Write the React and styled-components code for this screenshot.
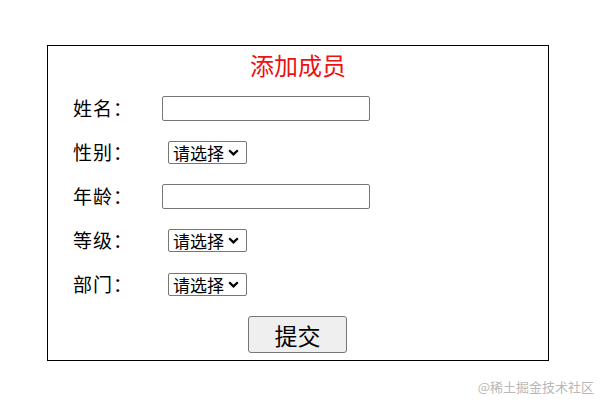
import React from "react";
import styled, { createGlobalStyle } from "styled-components";

const GlobalStyle = createGlobalStyle`
  html, body {
    margin: 0;
    padding: 0;
    background: #fff;
  }
  body {
    font-family: "Noto Sans CJK SC", "Noto Sans", sans-serif;
    color: #000;
  }
`;

const chevron = encodeURIComponent(
  '<svg xmlns="http://www.w3.org/2000/svg" width="11" height="7" viewBox="0 0 11 7"><path d="M1.2 1.2 L5.5 5.4 L9.8 1.2" fill="none" stroke="#000" stroke-width="2.2"/></svg>'
);

const Page = styled.div`
  width: 607px;
  height: 407px;
  padding: 45px 0 0 47px;
  box-sizing: border-box;
`;

const Card = styled.form`
  width: 502px;
  height: 316px;
  box-sizing: border-box;
  border: 1px solid #000;
  padding: 3px 0 0 25px;
  display: flex;
  flex-direction: column;
`;

const Title = styled.h2`
  margin: 0 0 5px -25px;
  font-size: 24px;
  line-height: 32px;
  font-weight: 400;
  color: #ee1111;
  text-align: center;
`;

const Row = styled.div`
  height: 44px;
  display: flex;
  align-items: center;
`;

const Label = styled.label`
  width: 89px;
  font-size: 19px;
  line-height: 24px;
  letter-spacing: 1px;
`;

const TextInput = styled.input`
  width: 208px;
  height: 25px;
  box-sizing: border-box;
  border: 1px solid #767676;
  border-radius: 2px;
  padding: 1px 2px;
  font-size: 14px;
`;

const Select = styled.select`
  appearance: none;
  -webkit-appearance: none;
  width: 79px;
  height: 23px;
  box-sizing: border-box;
  margin-left: 6px;
  border: 1px solid #767676;
  border-radius: 2px;
  background: #fff url("data:image/svg+xml,${chevron}") no-repeat right 7px center;
  font-family: "Noto Sans CJK SC", sans-serif;
  font-size: 17px;
  line-height: 21px;
  padding: 0 0 0 4px;
  color: #000;
`;

const Actions = styled.div`
  display: flex;
  justify-content: center;
  margin: 10px 0 0 -26px;
`;

const Button = styled.button`
  width: 99px;
  height: 37px;
  box-sizing: border-box;
  border: 1px solid #767676;
  border-radius: 3px;
  background: #efefef;
  font-family: "Noto Sans CJK SC", sans-serif;
  font-size: 23px;
  line-height: 30px;
  padding: 0;
  color: #000;
`;

const Footer = styled.div`
  width: 594px;
  margin-top: 17px;
  margin-left: -47px;
  text-align: right;
  font-size: 13px;
  line-height: 18px;
  color: #b8b8b8;
`;

const options = ["请选择"];

const SelectField = ({ label }) => (
  <Row>
    <Label>{label}</Label>
    <Select defaultValue="请选择">
      {options.map((o) => (
        <option key={o}>{o}</option>
      ))}
    </Select>
  </Row>
);

const InputField = ({ label }) => (
  <Row>
    <Label>{label}</Label>
    <TextInput type="text" />
  </Row>
);

const App = () => (
  <Page>
    <GlobalStyle />
    <Card onSubmit={(e) => e.preventDefault()}>
      <Title>添加成员</Title>
      <InputField label="姓名：" />
      <SelectField label="性别：" />
      <InputField label="年龄：" />
      <SelectField label="等级：" />
      <SelectField label="部门：" />
      <Actions>
        <Button type="submit">提交</Button>
      </Actions>
    </Card>
    <Footer>@稀土掘金技术社区</Footer>
  </Page>
);

export default App;
